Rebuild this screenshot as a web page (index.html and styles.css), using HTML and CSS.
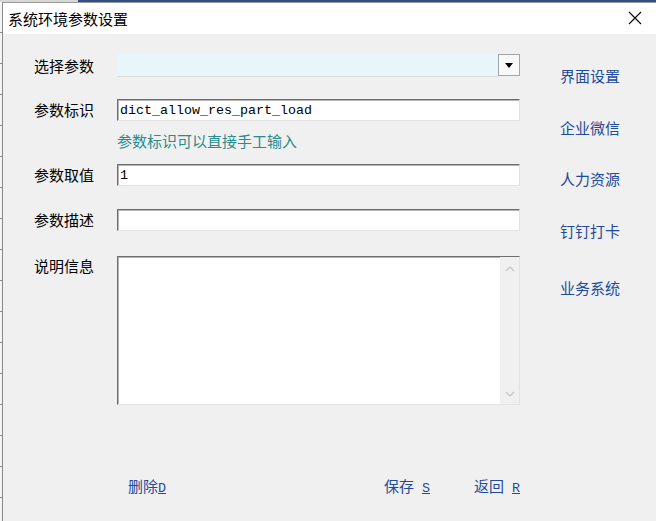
FILE: index.html
```html
<!DOCTYPE html>
<html lang="zh-CN">
<head>
<meta charset="UTF-8" />
<title>系统环境参数设置</title>
<link rel="stylesheet" href="styles.css">
</head>
<body>
<div class="desk-top"></div>
<div class="desk-row">
  <div class="desk-side"></div>
  <div class="dialog">
    <!-- заголовок окна -->
    <div class="dlg-title">
      <span>系统环境参数设置</span>
      <svg class="close" width="14" height="14" viewBox="0 0 14 14"><path d="M1 1 L13 13 M13 1 L1 13" stroke="#000" stroke-width="1.1" fill="none"/></svg>
    </div>
    <div class="dlg-body">
      <div class="main">
        <div class="row row-select">
          <div class="label">选择参数</div>
          <div class="field select">
            <div class="select-box"></div>
            <div class="select-btn"><span class="tri"></span></div>
          </div>
        </div>
        <div class="row row-id">
          <div class="label">参数标识</div>
          <input class="field input" type="text" value="dict_allow_res_part_load">
        </div>
        <div class="hint">参数标识可以直接手工输入</div>
        <div class="row row-val">
          <div class="label">参数取值</div>
          <input class="field input" type="text" value="1">
        </div>
        <div class="row row-desc">
          <div class="label">参数描述</div>
          <input class="field input" type="text" value="">
        </div>
        <div class="row row-info">
          <div class="label">说明信息</div>
          <div class="field memo">
            <div class="memo-text"></div>
            <div class="memo-scroll">
              <svg width="12" height="8" viewBox="0 0 12 8"><path d="M2 6 L6 2 L10 6" stroke="#c4c4c4" stroke-width="1.2" fill="none"/></svg>
              <svg width="12" height="8" viewBox="0 0 12 8"><path d="M2 2 L6 6 L10 2" stroke="#c4c4c4" stroke-width="1.2" fill="none"/></svg>
            </div>
          </div>
        </div>
        <!-- кнопки -->
        <div class="footer">
          <a class="lnk">删除<u>D</u></a>
          <div class="footer-right">
            <a class="lnk">保存<u class="sp">S</u></a>
            <a class="lnk">返回<u class="sp">R</u></a>
          </div>
        </div>
      </div>
      <nav class="side-links">
        <a class="lnk">界面设置</a>
        <a class="lnk">企业微信</a>
        <a class="lnk">人力资源</a>
        <a class="lnk">钉钉打卡</a>
        <a class="lnk last">业务系统</a>
      </nav>
    </div>
  </div>
</div>
</body>
</html>
```
FILE: styles.css
```css
/* общие */
html, body {
  margin: 0; padding: 0;
  height: 100%;
  overflow: hidden;
}
body {
  font-family: "Noto Sans CJK SC", "Liberation Sans", sans-serif;
  font-size: 15px;
  line-height: 20px;
  color: #000;
  background: #f0f0f0;
  display: flex;
  flex-direction: column;
}
/* фоновое окно за диалогом */
.desk-top {
  height: 2px;
  flex-shrink: 0;
  background: linear-gradient(90deg, #d6d6d6 0, #d6d6d6 78px, #2f4f82 78px, #2f4f82 100%);
}
.desk-row {
  flex: 1;
  display: flex;
}
.desk-side {
  width: 2px;
  flex-shrink: 0;
  background: repeating-linear-gradient(180deg, #f4f4f4 0, #f4f4f4 30px, #8c8c8c 30px, #8c8c8c 31px);
}
.dialog {
  flex: 1;
  border-left: 1px solid #8a8a8a;
  border-top: 1px solid #9a9a9a;
  display: flex;
  flex-direction: column;
  background: #f0f0f0;
}
.dlg-title {
  height: 31px;
  background: #fff;
  display: flex;
  align-items: center;
  justify-content: space-between;
  padding: 0 14px 0 5px;
  font-size: 15px;
}
.dlg-title .close {
  margin-top: -1px;
}
.dlg-body {
  display: flex;
  align-items: flex-start;
}
.main {
  width: 517px;
  padding-left: 31px;
  box-sizing: border-box;
  display: flex;
  flex-direction: column;
}
.row {
  display: flex;
  align-items: center;
}
.label {
  width: 83px;
  flex-shrink: 0;
}
.field {
  width: 403px;
  box-sizing: border-box;
}
.row-select { margin-top: 20px; height: 23px; }
.row-id { margin-top: 22px; }
.row-val { margin-top: 13px; }
.row-desc { margin-top: 23px; }
.row-info { margin-top: 25px; align-items: flex-start; }

/* выпадающий список */
.select {
  width: 404px;
  height: 23px;
  display: flex;
}
.select-box {
  flex: 1;
  background: #e7f6fb;
  border-bottom: 1px solid #dcdcdc;
}
.select-btn {
  width: 22px;
  height: 22px;
  box-sizing: border-box;
  border: 1px solid #a5a5a5;
  background: #f9f9f9;
  display: flex;
  align-items: center;
  justify-content: center;
}
.tri {
  width: 0; height: 0;
  border-left: 4px solid transparent;
  border-right: 4px solid transparent;
  border-top: 5px solid #000;
  margin-top: 1px;
}

/* поля ввода */
.input {
  height: 22px;
  margin: 0;
  padding: 0 0 0 2px;
  border: 1px solid;
  border-color: #6e6e6e #e3e3e3 #e3e3e3 #6e6e6e;
  box-shadow: inset 1px 1px 0 #b4b4b4;
  background: #fff;
  font-family: "Liberation Mono", monospace;
  font-size: 13.33px;
  color: #000;
  outline: none;
}
.hint {
  margin-top: 10px;
  padding-left: 83px;
  color: #2a8b8f;
}

/* многострочное поле */
.memo {
  height: 149px;
  display: flex;
  border: 1px solid;
  border-color: #6e6e6e #e3e3e3 #e3e3e3 #6e6e6e;
  box-shadow: inset 1px 1px 0 #b4b4b4;
  background: #fff;
}
.memo-text { flex: 1; }
.memo-scroll {
  width: 19px;
  background: #f0f0f0;
  display: flex;
  flex-direction: column;
  justify-content: space-between;
  align-items: center;
  padding: 8px 0 6px;
}

/* ссылки */
.lnk {
  color: #1e4b9b;
  cursor: pointer;
}
.lnk u {
  font-family: "Liberation Mono", monospace;
  font-size: 13.33px;
}
.lnk u.sp { margin-left: 8px; }
.footer {
  margin-top: 71px;
  padding-left: 94px;
  display: flex;
  justify-content: space-between;
}
.footer-right {
  display: flex;
  gap: 44px;
}
.side-links {
  margin-left: 40px;
  padding-top: 32px;
  display: flex;
  flex-direction: column;
  gap: 31.5px;
}
.side-links .last { margin-top: 6px; }
```
